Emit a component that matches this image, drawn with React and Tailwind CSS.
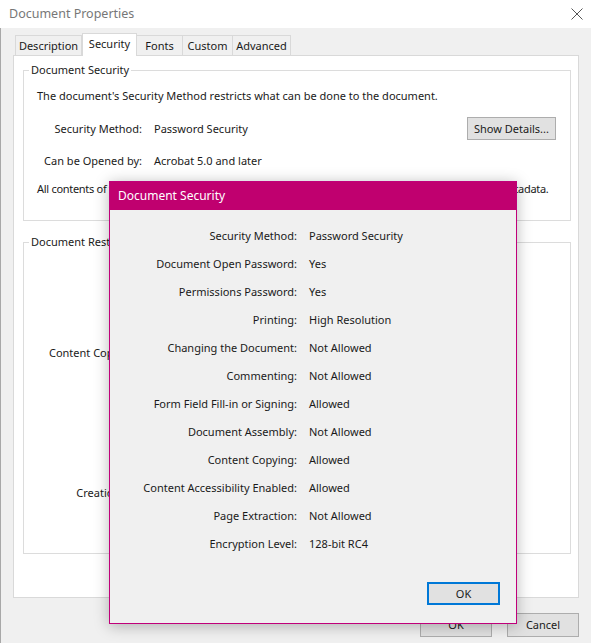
import React from "react";

const modalRows = [
  ["Security Method:", "Password Security"],
  ["Document Open Password:", "Yes"],
  ["Permissions Password:", "Yes"],
  ["Printing:", "High Resolution"],
  ["Changing the Document:", "Not Allowed"],
  ["Commenting:", "Not Allowed"],
  ["Form Field Fill-in or Signing:", "Allowed"],
  ["Document Assembly:", "Not Allowed"],
  ["Content Copying:", "Allowed"],
  ["Content Accessibility Enabled:", "Allowed"],
  ["Page Extraction:", "Not Allowed"],
  ["Encryption Level:", "128-bit RC4"],
];

const restrictionRows = [
  ["Printing:", "High Resolution"],
  ["Signing:", "Allowed"],
  ["Content Copying:", "Allowed"],
  ["Content Copying for Accessibility:", "Allowed"],
  ["Page Extraction:", "Not Allowed"],
  ["Commenting:", "Not Allowed"],
  ["Filling of form fields:", "Allowed"],
  ["Document Assembly:", "Not Allowed"],
  ["Creation of Template Pages:", "Not Allowed"],
];

const tabs = [
  ["Description", "w-[67px]"],
  ["Security", "w-[55px]"],
  ["Fonts", "w-[47px]"],
  ["Custom", "w-[51px]"],
  ["Advanced", "w-[59px]"],
];

export default function App() {
  return (
    <div className="relative w-[591px] h-[643px] overflow-hidden bg-[#f0f0f0] font-['Noto_Sans',sans-serif] text-[11px] text-[#1a1a1a] leading-[16px]">
      {/* Title bar */}
      <div className="h-[28px] bg-white flex items-center justify-between pl-[9px] pr-[7px]">
        <span className="text-[12.5px] text-[#777777]">Document Properties</span>
        <svg width="12" height="12" viewBox="0 0 12 12" className="mr-[1px]">
          <path d="M0.5 0.5 L11.5 11.5 M11.5 0.5 L0.5 11.5" stroke="#555" strokeWidth="1" fill="none" />
        </svg>
      </div>

      {/* Body */}
      <div className="h-[615px] border-l border-[#a8a8a8] pl-[12px] pr-[12px] pt-[5px] flex flex-col">
        {/* Tabs */}
        <div className="flex items-end pl-[2px] h-[22px] relative z-10">
          {tabs.map(([t, w], i) =>
            i === 1 ? (
              <div
                key={t}
                className={`${w} h-[23px] -mb-[1px] bg-white border border-b-0 border-[#d9d9d9] flex items-center justify-center pb-[2px]`}
              >
                {t}
              </div>
            ) : (
              <div
                key={t}
                className={`${w} h-[20px] bg-[#f0f0f0] border border-b-0 border-[#d9d9d9] flex items-center justify-center -ml-[1px] first:ml-0`}
              >
                {t}
              </div>
            )
          )}
        </div>

        {/* Panel */}
        <div className="w-[566px] h-[543px] bg-white border border-[#d9d9d9] pl-[9px] pr-[7px] pt-[6px]">
          <fieldset className="min-w-0 border border-[#dcdcdc]">
            <legend className="ml-[5px] px-[2px] leading-[16px]">Document Security</legend>
            <div className="pl-[13px] pr-[14px] pb-[21px]">
              <div className="mt-[8px] h-[20px] flex items-center">
                The document's Security Method restricts what can be done to the document.
              </div>
              <div className="mt-[11px] h-[23px] flex items-center">
                <span className="w-[105px] text-right">Security Method:</span>
                <span className="ml-[12px]">Password Security</span>
                <button className="ml-auto w-[89px] h-[23px] bg-[#e1e1e1] border border-[#adadad] flex items-center justify-center">
                  Show Details...
                </button>
              </div>
              <div className="mt-[11px] h-[20px] flex items-center">
                <span className="w-[105px] text-right">Can be Opened by:</span>
                <span className="ml-[12px]">Acrobat 5.0 and later</span>
              </div>
              <div className="mt-[8px] h-[20px] flex items-center whitespace-nowrap tracking-[-0.29px]">
                All contents of the document are encrypted and search engines cannot access the document's metadata.
              </div>
            </div>
          </fieldset>

          <fieldset className="min-w-0 mt-[13px] border border-[#dcdcdc]">
            <legend className="ml-[5px] px-[2px] leading-[16px]">Document Restrictions Summary</legend>
            <div className="pt-[5px] pb-[46px] flex flex-col">
              {restrictionRows.map(([l, v]) => (
                <div key={l} className="h-[28px] flex items-center">
                  <span className="w-[197px] text-right">{l}</span>
                  <span className="ml-[12px]">{v}</span>
                </div>
              ))}
            </div>
          </fieldset>
        </div>

        {/* Bottom buttons */}
        <div className="mt-[15px] flex justify-end gap-[15px]">
          <button className="w-[72px] h-[24px] bg-[#e1e1e1] border border-[#adadad] flex items-center justify-center">OK</button>
          <button className="w-[72px] h-[24px] bg-[#e1e1e1] border border-[#adadad] flex items-center justify-center">Cancel</button>
        </div>
      </div>

      {/* Modal */}
      <div className="absolute left-[109px] top-[181px] w-[408px] h-[443px] border border-[#c0007a] bg-[#f0f0f0] shadow-[0_2px_14px_rgba(0,0,0,0.28)] flex flex-col">
        <div className="h-[28px] bg-[#c0006f] flex items-center pl-[8px] text-white text-[12px]">Document Security</div>
        <div className="pt-[12px] flex flex-col">
          {modalRows.map(([l, v]) => (
            <div key={l} className="h-[28px] flex items-center">
              <span className="w-[187px] text-right">{l}</span>
              <span className="ml-[12px]">{v}</span>
            </div>
          ))}
        </div>
        <div className="mt-[24px] flex justify-end pr-[16px]">
          <button className="w-[73px] h-[23px] bg-[#e1e1e1] border-2 border-[#0078d7] flex items-center justify-center">OK</button>
        </div>
      </div>
    </div>
  );
}
